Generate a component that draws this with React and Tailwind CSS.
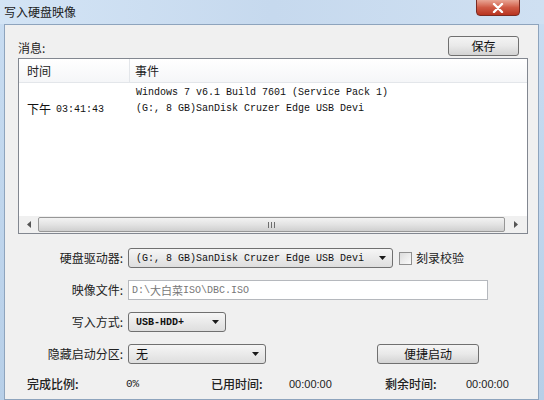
import React from "react";

const cjk = { fontFamily: '"Noto Sans CJK SC", "Noto Sans", sans-serif' };
const mono = { fontFamily: '"Liberation Mono", "Noto Sans CJK SC", monospace' };

const Arrow = () => (
  <svg width="7" height="4" viewBox="0 0 7 4" className="shrink-0">
    <path d="M0 0h7L3.5 4z" fill="#1a1a1a" />
  </svg>
);

const Combo = ({ width, children, textStyle = mono, textClass = "text-[10px]" }) => (
  <div
    className={`${width} h-[20px] flex items-center justify-between pl-[7px] pr-[6px] border border-[#707070] rounded-[3px] bg-gradient-to-b from-[#f6f6f6] to-[#dedede]`}
  >
    <span className={`${textClass} text-[#111] whitespace-nowrap overflow-hidden`} style={textStyle}>
      {children}
    </span>
    <Arrow />
  </div>
);

const Label = ({ children }) => (
  <div className="w-[110px] text-right text-[12px] text-[#222] pr-[5px]" style={cjk}>
    {children}
  </div>
);

const Button = ({ width, children }) => (
  <div
    className={`${width} h-[20px] flex items-center justify-center border border-[#707070] rounded-[3px] bg-gradient-to-b from-[#f4f4f4] via-[#e9e9e9] to-[#d3d3d3] text-[12px] text-[#111]`}
    style={cjk}
  >
    {children}
  </div>
);

export default function App() {
  return (
    <div className="w-[544px] h-[400px] overflow-hidden flex flex-col bg-gradient-to-b from-[#c9ddf2] to-[#b7cfe8]">
      {/* title bar */}
      <div className="h-[24px] shrink-0 flex items-start justify-between pl-[4px] pr-[24px] bg-gradient-to-r from-[#d3e4f5] via-[#c6d9ee] to-[#cfe0f2]">
        <span className="text-[12px] leading-[24px] text-[#1b1b1b]" style={cjk}>
          写入硬盘映像
        </span>
        <div className="w-[44px] h-[17px] mt-[-1px] rounded-b-[4px] border border-[#7a2b22] flex items-center justify-center bg-gradient-to-b from-[#e8a595] via-[#cf5a45] to-[#b8331f]">
          <svg width="12" height="10" viewBox="0 0 12 10">
            <path d="M2 1l8 8M10 1l-8 8" stroke="#fff" strokeWidth="2.4" strokeLinecap="round" />
          </svg>
        </div>
      </div>

      {/* body */}
      <div className="flex-1 flex pl-[4px] pr-[5px]">
        <div className="flex-1 flex flex-col bg-[#f0f0f0] border border-[#8ea4bd] pl-[13px] pr-[10px] pt-[11px]">
          <div className="flex items-end justify-between h-[20px]">
            <span className="text-[12px] leading-[16px] text-[#222]" style={cjk}>
              消息:
            </span>
            <div className="mr-[9px]">
              <Button width="w-[71px]">保存</Button>
            </div>
          </div>

          {/* list view */}
          <div className="mt-[2px] h-[176px] border border-[#828790] bg-white flex flex-col">
            <div className="h-[24px] flex border-b border-[#e3e6ea] bg-gradient-to-b from-white to-[#f5f6f8] text-[12px] text-[#222]" style={cjk}>
              <div className="w-[111px] pl-[8px] flex items-center border-r border-[#e3e6ea]">时间</div>
              <div className="pl-[5px] flex items-center">事件</div>
            </div>
            <div className="flex-1 flex pt-[2px]">
              <div className="w-[111px] pl-[8px] pt-[16px] h-[32px] flex items-center text-[12px] text-[#111] whitespace-nowrap" style={cjk}>
                下午<span style={mono} className="ml-[5px] text-[10px]">03:41:43</span>
              </div>
              <div className="pl-[6px] flex flex-col text-[10px] leading-[16px] text-[#111] whitespace-nowrap" style={mono}>
                <span>Windows 7 v6.1 Build 7601 (Service Pack 1)</span>
                <span>(G:, 8 GB)SanDisk Cruzer Edge USB Devi</span>
              </div>
            </div>
            {/* horizontal scrollbar */}
            <div className="h-[17px] flex items-center bg-[#f0f0f0] px-[1px]">
              <div className="w-[17px] h-[17px] flex items-center justify-center">
                <svg width="4" height="7" viewBox="0 0 4 7"><path d="M4 0v7L0 3.5z" fill="#555" /></svg>
              </div>
              <div className="flex-1 h-[15px] mx-[1px] border border-[#979797] rounded-[2px] bg-gradient-to-b from-[#f3f3f3] via-[#e3e3e3] to-[#cfcfcf] flex items-center justify-center">
                <div className="flex gap-[2px]">
                  <div className="w-[1px] h-[6px] bg-[#6e6e6e]" />
                  <div className="w-[1px] h-[6px] bg-[#6e6e6e]" />
                  <div className="w-[1px] h-[6px] bg-[#6e6e6e]" />
                </div>
              </div>
              <div className="w-[20px] h-[17px] flex items-center justify-center">
                <svg width="4" height="7" viewBox="0 0 4 7"><path d="M0 0v7L4 3.5z" fill="#555" /></svg>
              </div>
            </div>
          </div>

          {/* form */}
          <div className="mt-[14px] flex flex-col gap-[12px]">
            <div className="flex items-center h-[20px]">
              <Label>硬盘驱动器:</Label>
              <Combo width="w-[265px]">(G:, 8 GB)SanDisk Cruzer Edge USB Devi</Combo>
              <div className="ml-[6px] w-[13px] h-[13px] border border-[#8f8f8f] bg-gradient-to-br from-[#dcdcdc] to-[#fbfbfb]" />
              <span className="ml-[4px] text-[12px] text-[#222]" style={cjk}>刻录校验</span>
            </div>
            <div className="flex items-center h-[20px]">
              <Label>映像文件:</Label>
              <div className="w-[360px] h-[20px] border border-[#b5b8bd] bg-white flex items-center pl-[3px] text-[10px] text-[#777] whitespace-nowrap" style={mono}>
                D:\<span style={cjk} className="text-[11px]">大白菜</span>ISO\DBC.ISO
              </div>
            </div>
            <div className="flex items-center h-[20px]">
              <Label>写入方式:</Label>
              <Combo width="w-[98px]" textClass="text-[10px] font-bold">USB-HDD+</Combo>
            </div>
            <div className="flex items-center h-[20px]">
              <Label>隐藏启动分区:</Label>
              <Combo width="w-[138px]" textStyle={cjk} textClass="text-[12px]">无</Combo>
              <div className="ml-[111px]">
                <Button width="w-[102px]">便捷启动</Button>
              </div>
            </div>
          </div>

          {/* status */}
          <div className="mt-[11px] flex items-center text-[12px] text-[#222] whitespace-nowrap">
            <span className="w-[108px] pl-[9px] font-medium" style={cjk}>完成比例:</span>
            <span className="w-[85px] text-[11px]" style={mono}>0%</span>
            <span className="w-[78px] font-medium" style={cjk}>已用时间:</span>
            <span className="w-[96px] text-[11px]" style={{ fontFamily: '"Liberation Sans", sans-serif' }}>00:00:00</span>
            <span className="w-[81px] font-medium" style={cjk}>剩余时间:</span>
            <span className="text-[11px]" style={{ fontFamily: '"Liberation Sans", sans-serif' }}>00:00:00</span>
          </div>
        </div>
      </div>
    </div>
  );
}
